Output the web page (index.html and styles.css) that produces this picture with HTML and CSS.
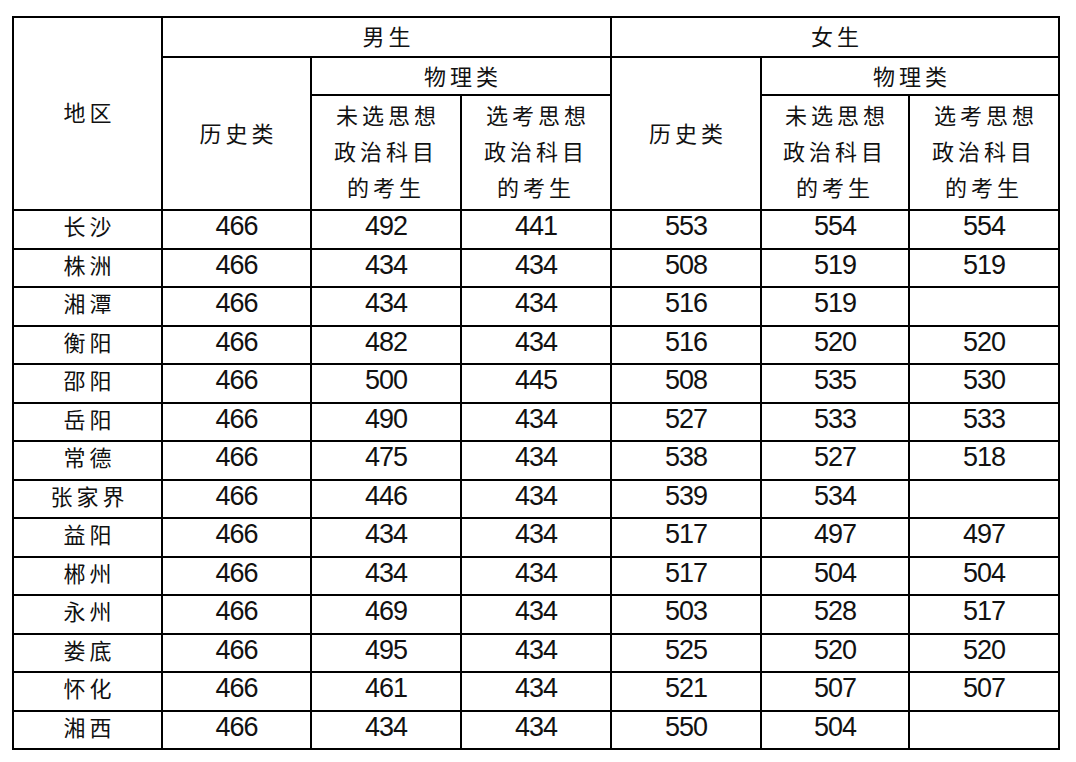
FILE: index.html
```html
<!DOCTYPE html>
<html lang="zh">
<head>
<meta charset="utf-8">
<link rel="stylesheet" href="styles.css">
</head>
<body>
<table class="score">
<colgroup>
<col class="c1"><col class="c2"><col class="c3"><col class="c4"><col class="c5"><col class="c6"><col class="c7">
</colgroup>
<thead>
<tr class="h1">
<th rowspan="3" class="cn region">地区</th>
<th colspan="3" class="cn">男生</th>
<th colspan="3" class="cn">女生</th>
</tr>
<tr class="h2">
<th rowspan="2" class="cn hist">历史类</th>
<th colspan="2" class="cn">物理类</th>
<th rowspan="2" class="cn hist">历史类</th>
<th colspan="2" class="cn">物理类</th>
</tr>
<tr class="h3">
<th class="cn multi">未选思想<br>政治科目<br>的考生</th>
<th class="cn multi">选考思想<br>政治科目<br>的考生</th>
<th class="cn multi">未选思想<br>政治科目<br>的考生</th>
<th class="cn multi">选考思想<br>政治科目<br>的考生</th>
</tr>
</thead>
<tbody>
<tr><td class="cn">长沙</td><td>466</td><td>492</td><td>441</td><td>553</td><td>554</td><td>554</td></tr>
<tr><td class="cn">株洲</td><td>466</td><td>434</td><td>434</td><td>508</td><td>519</td><td>519</td></tr>
<tr><td class="cn">湘潭</td><td>466</td><td>434</td><td>434</td><td>516</td><td>519</td><td></td></tr>
<tr><td class="cn">衡阳</td><td>466</td><td>482</td><td>434</td><td>516</td><td>520</td><td>520</td></tr>
<tr><td class="cn">邵阳</td><td>466</td><td>500</td><td>445</td><td>508</td><td>535</td><td>530</td></tr>
<tr><td class="cn">岳阳</td><td>466</td><td>490</td><td>434</td><td>527</td><td>533</td><td>533</td></tr>
<tr><td class="cn">常德</td><td>466</td><td>475</td><td>434</td><td>538</td><td>527</td><td>518</td></tr>
<tr><td class="cn">张家界</td><td>466</td><td>446</td><td>434</td><td>539</td><td>534</td><td></td></tr>
<tr><td class="cn">益阳</td><td>466</td><td>434</td><td>434</td><td>517</td><td>497</td><td>497</td></tr>
<tr><td class="cn">郴州</td><td>466</td><td>434</td><td>434</td><td>517</td><td>504</td><td>504</td></tr>
<tr><td class="cn">永州</td><td>466</td><td>469</td><td>434</td><td>503</td><td>528</td><td>517</td></tr>
<tr><td class="cn">娄底</td><td>466</td><td>495</td><td>434</td><td>525</td><td>520</td><td>520</td></tr>
<tr><td class="cn">怀化</td><td>466</td><td>461</td><td>434</td><td>521</td><td>507</td><td>507</td></tr>
<tr><td class="cn">湘西</td><td>466</td><td>434</td><td>434</td><td>550</td><td>504</td><td></td></tr>
</tbody>
</table>
</body>
</html>
```

FILE: styles.css
```css
html, body {
  margin: 0;
  padding: 0;
  background: #fff;
}
body {
  padding: 16px 0 0 12px;
}
.score {
  border-collapse: collapse;
  table-layout: fixed;
  width: 1047px;
  color: #111;
  font-family: "Liberation Sans", Arial, sans-serif;
}
.c1 { width: 149px; }
.c2 { width: 149px; }
.c3 { width: 150px; }
.c4 { width: 150px; }
.c5 { width: 150px; }
.c6 { width: 148px; }
.c7 { width: 150px; }
.score th, .score td {
  border: 2px solid #000;
  padding: 0;
  text-align: center;
  vertical-align: middle;
  font-weight: normal;
}
.score td {
  height: 38.5px;
  font-size: 27px;
  letter-spacing: -1px;
  line-height: 28px;
  padding-bottom: 6px;
  box-sizing: border-box;
}
.cn {
  font-family: "Noto Sans CJK SC", "Noto Sans CJK JP", sans-serif;
  font-weight: 300;
  font-size: 22px;
  letter-spacing: 4px;
  text-indent: 4px;
}
.score td.cn {
  font-size: 22px;
  letter-spacing: 4px;
  line-height: 28px;
  padding-bottom: 8px;
}
.h1 th { height: 34px; padding-bottom: 4px; }
.h2 th { height: 33px; padding-bottom: 3px; }
.h3 th { height: 108px; padding-bottom: 5px; }
.multi {
  line-height: 36px;
}
.score th.hist {
  padding-bottom: 3px;
}
.score th.region {
  padding-bottom: 6px;
}
```
